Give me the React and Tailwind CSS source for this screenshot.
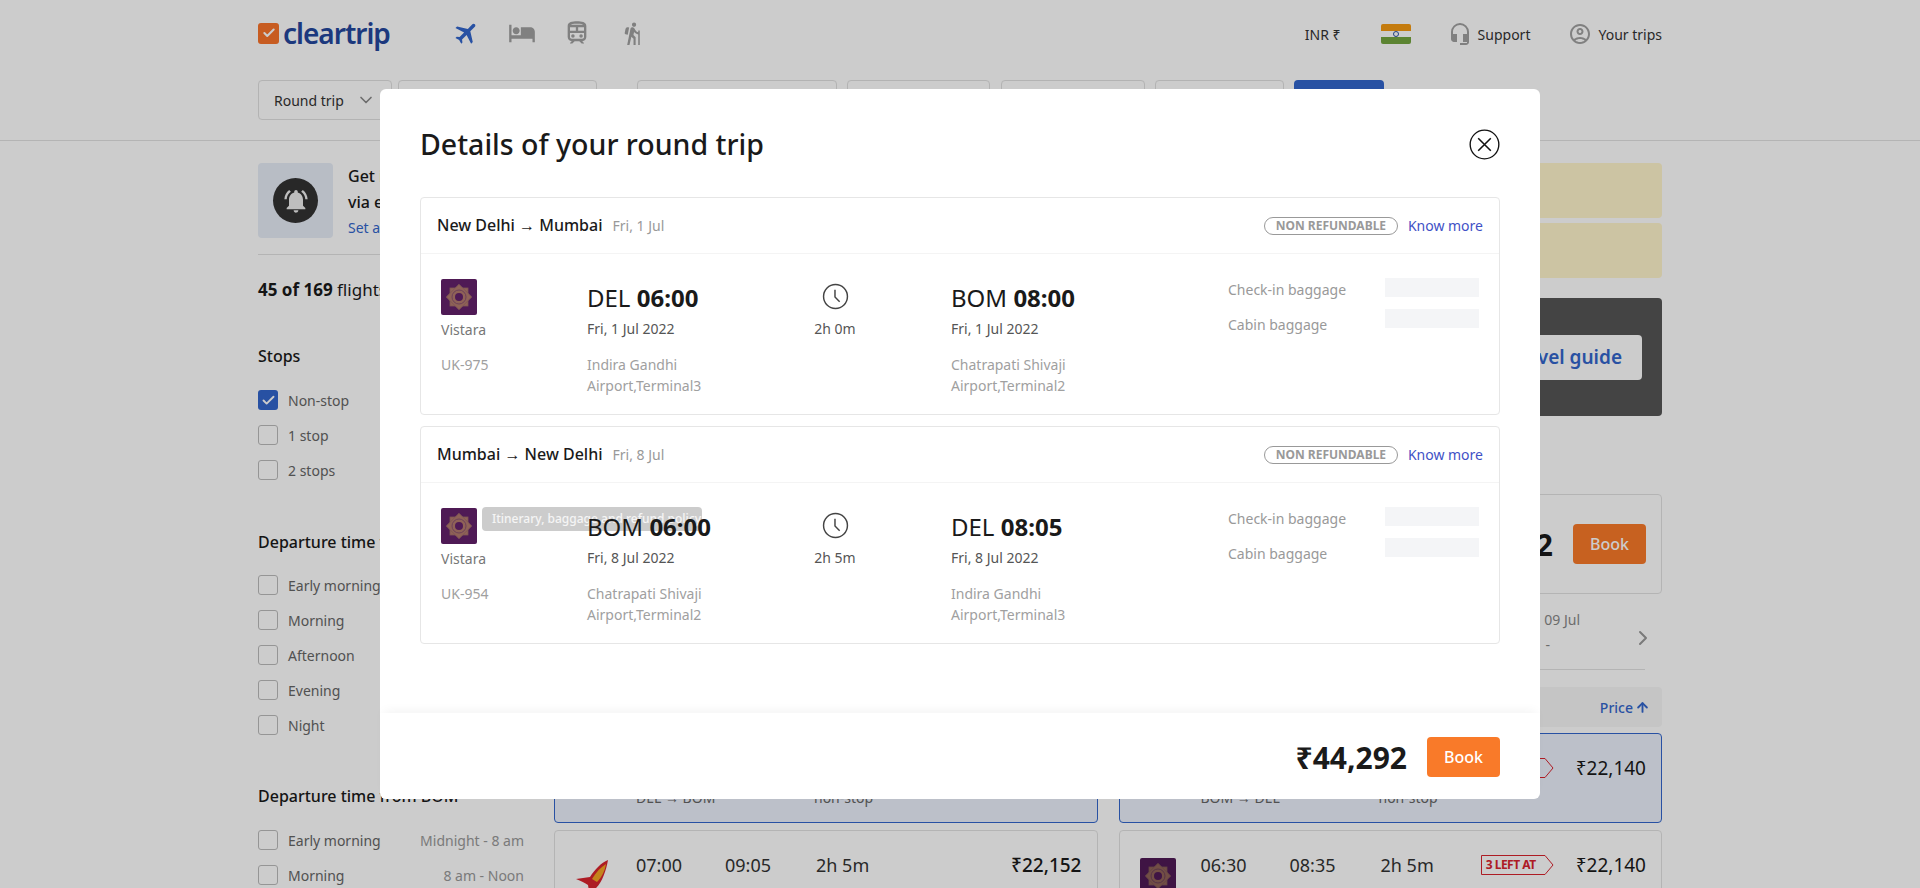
import { MdFlight, MdHotel, MdOutlineTrain, MdHiking, MdHeadsetMic, MdOutlineAccountCircle, MdNotificationsActive } from "react-icons/md";
import { ChevronDown, ChevronRight, ArrowUp, Check } from "lucide-react";

const filterTimes = [
  { label: "Early morning", range: "Midnight - 8 am" },
  { label: "Morning", range: "8 am - Noon" },
  { label: "Afternoon", range: "Noon - 4 pm" },
  { label: "Evening", range: "4 pm - 8 pm" },
  { label: "Night", range: "8 pm - Midnight" },
];

const legs = [
  {
    origin: "New Delhi",
    dest: "Mumbai",
    day: "Fri, 1 Jul",
    flight: "UK-975",
    from: "DEL",
    depart: "06:00",
    to: "BOM",
    arrive: "08:00",
    date: "Fri, 1 Jul 2022",
    duration: "2h 0m",
    fromAirport: ["Indira Gandhi", "Airport,Terminal3"],
    toAirport: ["Chatrapati Shivaji", "Airport,Terminal2"],
  },
  {
    origin: "Mumbai",
    dest: "New Delhi",
    day: "Fri, 8 Jul",
    flight: "UK-954",
    from: "BOM",
    depart: "06:00",
    to: "DEL",
    arrive: "08:05",
    date: "Fri, 8 Jul 2022",
    duration: "2h 5m",
    fromAirport: ["Chatrapati Shivaji", "Airport,Terminal2"],
    toAirport: ["Indira Gandhi", "Airport,Terminal3"],
    tooltip: true,
  },
];

function VistaraLogo({ className }) {
  return (
    <svg viewBox="0 0 36 36" className={className}>
      <rect width="36" height="36" rx="2" fill="#4f1a55" />
      <g fill="#a57a58" opacity="0.75" stroke="#8d6a55" strokeWidth="0.8">
        <rect x="9" y="9" width="18" height="18" />
        <rect x="9" y="9" width="18" height="18" transform="rotate(45 18 18)" />
      </g>
      <circle cx="18" cy="18" r="7" fill="none" stroke="#6d4159" strokeWidth="1" />
      <circle cx="18" cy="18" r="4" fill="#4f1a55" />
    </svg>
  );
}

function AirIndiaLogo() {
  return (
    <svg viewBox="0 0 36 36" className="size-9 shrink-0">
      <path d="M33 2 C26 5 20 11 15 19 L1 21 C6 23 10 25 13 27 L14 33 L20 31 C27 25 31 13 33 2Z" fill="#d9232e" />
      <path d="M31 6 C26 9 21 14 17 21 L22 24 C27 19 30 12 31 6Z" fill="#f5a623" />
    </svg>
  );
}

function FilterRow({ label, range, checked }) {
  return (
    <div className="flex items-center h-5 mb-[15px] text-[14px] text-[#666]">
      {checked ? (
        <span className="size-5 rounded-[3px] bg-[#3366cc] flex items-center justify-center text-white">
          <Check size={15} strokeWidth={3} />
        </span>
      ) : (
        <span className="size-5 rounded-[3px] border border-[#bbb] bg-white/0" />
      )}
      <span className="ml-[10px]">{label}</span>
      {range && <span className="ml-auto mr-[6px] text-[#999]">{range}</span>}
    </div>
  );
}

function Sidebar() {
  return (
    <aside className="w-[272px] shrink-0 pt-[22px]">
      <div className="flex gap-[15px] pb-[13px] border-b border-[#e2e2e2]">
        <div className="size-[75px] rounded bg-[#e7edf7] flex items-center justify-center">
          <span className="size-[45px] rounded-full bg-[#333] flex items-center justify-center text-[#eee]">
            <MdNotificationsActive size={28} />
          </span>
        </div>
        <div className="text-[16px] leading-[26px] text-[#1a1a1a] font-medium">
          <div>Get instant fare alerts</div>
          <div>via email</div>
          <div className="text-[14px] font-normal text-[#3366cc]">Set alert</div>
        </div>
      </div>
      <div className="mt-[23px] h-6 leading-6 text-[17px] text-[#1a1a1a] whitespace-nowrap">
        <b className="font-bold">45 of 169</b> flights
      </div>
      <h3 className="mt-[42px] mb-[22px] h-6 leading-6 text-[16px] font-medium text-[#1a1a1a]">Stops</h3>
      <FilterRow label="Non-stop" checked />
      <FilterRow label="1 stop" />
      <FilterRow label="2 stops" />
      <h3 className="mt-[50px] mb-[21px] h-6 leading-6 text-[16px] font-medium text-[#1a1a1a]">Departure time from DEL</h3>
      {filterTimes.map((t) => (
        <FilterRow key={t.label} {...t} />
      ))}
      <h3 className="mt-[49px] mb-[22px] h-6 leading-6 text-[16px] font-medium text-[#1a1a1a]">Departure time from BOM</h3>
      {filterTimes.map((t) => (
        <FilterRow key={t.label} {...t} />
      ))}
    </aside>
  );
}

function Field({ className, children }) {
  return (
    <div className={"h-10 rounded border border-[#e0e0e0] bg-white/40 flex items-center px-[15px] text-[14px] text-[#333] " + className}>
      {children}
    </div>
  );
}

function Header() {
  return (
    <header className="h-[141px] border-b border-[#e2e2e2] px-[258px]">
      <div className="h-[80px] flex items-start pt-[19px]">
        <div className="flex items-center w-[195px]">
          <span className="size-[21px] rounded-[3px] bg-[#f9732a] flex items-center justify-center text-white">
            <Check size={14} strokeWidth={3.5} />
          </span>
          <span className="ml-[4px] text-[28px] leading-[28px] font-semibold text-[#24479d] tracking-[-1px]">cleartrip</span>
        </div>
        <div className="flex items-center gap-[27px] text-[#a0a0a0] mt-[-1px]">
          <span className="w-7 flex justify-center"><MdFlight size={30} className="rotate-45 text-[#3366cc]" /></span>
          <span className="w-7 flex justify-center"><MdHotel size={28} /></span>
          <span className="w-7 flex justify-center"><MdOutlineTrain size={28} /></span>
          <span className="w-7 flex justify-center"><MdHiking size={25} /></span>
        </div>
        <div className="ml-auto mt-[3px] flex items-center text-[14px] text-[#333]">
          <span>INR ₹</span>
          <span className="ml-[40px] w-[30px] h-5 rounded-[2px] overflow-hidden flex flex-col">
            <span className="flex-1 bg-[#f59a12]" />
            <span className="flex-1 bg-white flex items-center justify-center">
              <span className="size-[6px] rounded-full border border-[#2a52a0]" />
            </span>
            <span className="flex-1 bg-[#74a53f]" />
          </span>
          <MdHeadsetMic size={24} className="ml-[37px] text-[#a0a0a0]" />
          <span className="ml-[6px]">Support</span>
          <MdOutlineAccountCircle size={24} className="ml-[38px] text-[#a0a0a0]" />
          <span className="ml-[6px]">Your trips</span>
        </div>
      </div>
      <div className="flex">
        <Field className="w-[134px] justify-between">
          Round trip <ChevronDown size={20} className="text-[#888]" />
        </Field>
        <Field className="w-[199px] ml-[6px]">New Delhi</Field>
        <Field className="w-[200px] ml-[40px]">Mumbai</Field>
        <Field className="w-[143px] ml-[10px]">Fri, Jul 1</Field>
        <Field className="w-[144px] ml-[11px]">Fri, Jul 8</Field>
        <Field className="w-[129px] ml-[10px]">1 Adult</Field>
        <div className="w-[90px] h-10 ml-[10px] rounded bg-[#3366cc]" />
      </div>
    </header>
  );
}

function LeftPill() {
  return (
    <span className="relative ml-auto h-[20px] w-[74px] text-[12px] leading-[20px] font-bold tracking-[-0.5px] text-[#d9232e] pl-[6px] whitespace-nowrap">
      <svg viewBox="0 0 74 20" className="absolute inset-0 size-full" fill="none" stroke="#d9232e">
        <path d="M1.5 .5 H65 L73 10 L65 19.5 H1.5 Z" />
      </svg>
      3 LEFT AT
    </span>
  );
}

function ResultCard({ selected, logo, times, pill, price, sub }) {
  return (
    <div className={"rounded border h-[90px] pl-5 pr-[15px] " + (selected ? "border-[#3366cc] bg-[#ebf1fc]" : "border-[#e2e2e2]")}>
      <div className="flex items-center h-[68px] text-[18px] text-[#333]">
        <span className="w-[61px] mt-[22px]">{logo}</span>
        <span className="w-[89px]">{times[0]}</span>
        <span className="w-[91px]">{times[1]}</span>
        <span>{times[2]}</span>
        {pill && <LeftPill />}
        <span className={"text-[19px] text-[#1a1a1a] " + (pill ? "ml-[22px]" : "ml-auto font-medium")}>{price}</span>
      </div>
      {sub && (
        <div className="flex text-[14px] text-[#666] pl-[61px] leading-5 -mt-[14px]">
          <span className="w-[178px]">{sub[0]}</span>
          <span>{sub[1]}</span>
        </div>
      )}
    </div>
  );
}

function Results() {
  return (
    <main className="flex-1 ml-[24px] pt-[22px] min-w-0">
      <div className="h-[331px] flex justify-end">
        <div className="w-[222px]">
          <div className="h-[55px] rounded bg-[#fff5cc]" />
          <div className="h-[55px] mt-[5px] rounded bg-[#fff5cc]" />
          <div className="h-[118px] mt-[20px] rounded bg-[#555] flex items-center justify-end pr-[20px]">
            <span className="h-[45px] w-[180px] rounded bg-white text-[#3366cc] text-[19px] font-semibold flex items-center justify-end pr-[20px] whitespace-nowrap">
              Travel guide
            </span>
          </div>
        </div>
      </div>
      <div className="h-[100px] rounded border border-[#e2e2e2] flex items-center justify-end pr-[15px]">
        <span className="text-[30px] font-bold text-[#1a1a1a]">₹44,292</span>
        <span className="ml-[20px] w-[73px] h-10 rounded bg-[#f97a29] text-white text-[16px] font-medium flex items-center justify-center">Book</span>
      </div>
      <div className="h-[76px] border-b border-[#e2e2e2] mr-[17px] flex items-center justify-end text-[14px] text-[#888]">
        <div className="w-[100px] leading-[25px] mr-[51px] text-right">
          <div>Fri, 09 Jul</div>
          <div className="pr-[30px]">-</div>
        </div>
        <ChevronRight size={24} className="text-[#999] -mr-[10px] mt-[12px]" />
      </div>
      <div className="mt-[17px] h-10 rounded bg-[#f7f7f7] flex items-center justify-end pr-[12px] text-[14px] text-[#3366cc] font-medium">
        Price <ArrowUp size={15} strokeWidth={3} className="ml-[2px]" />
      </div>
      <div className="grid grid-cols-2 gap-x-[21px] gap-y-[7px] mt-[6px]">
        <ResultCard selected times={["06:00", "08:00", "2h 0m"]} price="₹22,152" sub={["DEL → BOM", "non-stop"]} />
        <ResultCard selected times={["06:00", "08:05", "2h 5m"]} pill price="₹22,140" sub={["BOM → DEL", "non-stop"]} />
        <ResultCard logo={<AirIndiaLogo />} times={["07:00", "09:05", "2h 5m"]} price="₹22,152" />
        <ResultCard logo={<VistaraLogo className="size-9" />} times={["06:30", "08:35", "2h 5m"]} pill price="₹22,140" />
      </div>
    </main>
  );
}

function LegCard({ leg }) {
  return (
    <section className="h-[218px] rounded border border-[#e6e6e6] flex flex-col">
      <div className="h-[56px] shrink-0 border-b border-[#f4f4f4] flex items-center px-4">
        <span className="text-[16px] font-medium text-[#1a1a1a]">
          {leg.origin} <span className="font-['Liberation_Sans',sans-serif] font-normal">→</span> {leg.dest}
        </span>
        <span className="ml-[10px] text-[14px] text-[#999]">{leg.day}</span>
        <span className="ml-auto h-[18px] w-[134px] rounded-full border border-[#999] text-[12px] leading-4 font-bold text-[#999] text-center whitespace-nowrap">
          NON REFUNDABLE
        </span>
        <span className="ml-[10px] text-[14px] text-[#3f51c6]">Know more</span>
      </div>
      <div className="relative flex pt-[25px] px-5 text-[14px] leading-5">
        {leg.tooltip && (
          <div className="absolute left-[61px] top-[24px] w-[220px] h-6 rounded bg-[#ccc] text-white/80 text-[12px] font-medium leading-6 px-[10px] whitespace-nowrap overflow-hidden">
            Itinerary, baggage and refund policy
          </div>
        )}
        <div className="w-[146px] shrink-0">
          <VistaraLogo className="size-[36px]" />
          <div className="mt-[5px] text-[#777]">Vistara</div>
          <div className="mt-[15px] text-[#a0a0a0]">{leg.flight}</div>
        </div>
        <div className="relative w-[175px] shrink-0">
          <div className="mt-[3px] h-8 leading-8 text-[24px] text-[#1a1a1a]">
            {leg.from} <b className="font-bold">{leg.depart}</b>
          </div>
          <div className="mt-[5px] text-[#555]">{leg.date}</div>
          <div className="mt-[15px] leading-[21px] text-[#a0a0a0]">
            {leg.fromAirport[0]}
            <br />
            {leg.fromAirport[1]}
          </div>
        </div>
        <div className="w-[190px] shrink-0 flex flex-col items-center pr-[44px]">
          <svg viewBox="0 0 26 26" className="size-[27px] mt-[4px]" fill="none" stroke="#444" strokeWidth="1.4">
            <circle cx="13" cy="13" r="11.5" />
            <path d="M12.5 6.5 V13.5 L17 18" />
          </svg>
          <div className="mt-[9px] text-[#555]">{leg.duration}</div>
        </div>
        <div className="w-[276px] shrink-0 -ml-px mr-px">
          <div className="mt-[3px] h-8 leading-8 text-[24px] text-[#1a1a1a]">
            {leg.to} <b className="font-bold">{leg.arrive}</b>
          </div>
          <div className="mt-[5px] text-[#555]">{leg.date}</div>
          <div className="mt-[15px] leading-[21px] text-[#a0a0a0]">
            {leg.toAirport[0]}
            <br />
            {leg.toAirport[1]}
          </div>
        </div>
        <div className="flex-1 text-[#999] -mt-px">
          <div className="flex justify-between h-[19px] mb-[12px]">
            <span className="mt-[2px]">Check-in baggage</span>
            <span className="w-[94px] h-[19px] bg-[#f4f5f7]" />
          </div>
          <div className="flex justify-between h-[19px]">
            <span className="mt-[6px]">Cabin baggage</span>
            <span className="w-[94px] h-[19px] bg-[#f4f5f7]" />
          </div>
        </div>
      </div>
    </section>
  );
}

function RoundTripModal() {
  return (
    <div className="absolute left-[380px] top-[89px] w-[1160px] h-[710px] rounded-[6px] bg-white flex flex-col">
      <div className="flex-1 px-10">
        <div className="h-[108px] flex items-center justify-between pt-[2px]">
          <h1 className="text-[28.5px] font-medium text-[#1a1a1a]">Details of your round trip</h1>
          <svg viewBox="0 0 32 32" className="size-[31px]" fill="none" stroke="#111" strokeWidth="1.4">
            <circle cx="16" cy="16" r="14.8" />
            <path d="M9.5 9.5 L22.5 22.5 M22.5 9.5 L9.5 22.5" strokeWidth="1.6" />
          </svg>
        </div>
        <div className="flex flex-col gap-[11px]">
          {legs.map((leg) => (
            <LegCard key={leg.origin} leg={leg} />
          ))}
        </div>
      </div>
      <div className="h-[86px] shrink-0 px-10 pt-[2px] flex items-center justify-end shadow-[0_-6px_10px_-4px_rgba(0,0,0,0.05)]">
        <span className="text-[30px] font-bold text-[#1a1a1a]">₹44,292</span>
        <button className="ml-[20px] w-[73px] h-10 rounded bg-[#f97a29] text-white text-[16px] font-medium">Book</button>
      </div>
    </div>
  );
}

export default function App() {
  return (
    <div className="relative h-[888px] overflow-hidden bg-white font-['Noto_Sans',sans-serif]">
      <Header />
      <div className="flex px-[258px]">
        <Sidebar />
        <Results />
      </div>
      <div className="absolute inset-0 bg-black/20" />
      <RoundTripModal />
    </div>
  );
}
